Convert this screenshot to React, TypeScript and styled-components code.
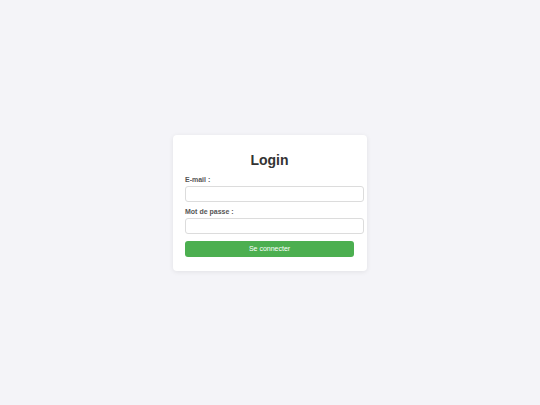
import styled, { createGlobalStyle } from "styled-components";

const GlobalStyle = createGlobalStyle`
  html, body {
    margin: 0;
    padding: 0;
    background: #f4f4f8;
    font-family: "Liberation Sans", Arial, sans-serif;
  }
`;

const Page = styled.div`
  display: flex;
  align-items: center;
  justify-content: center;
  min-height: 100vh;
`;

const Card = styled.form`
  display: flex;
  flex-direction: column;
  width: 169px;
  padding: 12px 13px 14px 12px;
  background: #fff;
  border-radius: 4px;
  box-shadow: 0 1px 5px rgba(0, 0, 0, 0.08);
`;

const Title = styled.h2`
  margin: 5px 0 8px;
  font-size: 14px;
  line-height: 16px;
  font-weight: 700;
  color: #333;
  text-align: center;
`;

const Label = styled.label`
  display: block;
  font-size: 7px;
  line-height: 8px;
  font-weight: 700;
  color: #555;
  margin-bottom: 2px;
`;

const Input = styled.input`
  box-sizing: content-box;
  width: 100%;
  height: 14px;
  padding: 0 4px;
  margin: 0 0 6px;
  border: 1px solid #dcdcdc;
  border-radius: 3px;
  background: #fff;
  font-family: inherit;
  font-size: 7px;
  outline: none;
`;

const Button = styled.button`
  height: 16px;
  margin-top: 1px;
  border: none;
  border-radius: 3px;
  background: #4caf50;
  color: #fff;
  font-family: inherit;
  font-size: 7px;
  cursor: pointer;
`;

export default function App() {
  return (
    <>
      <GlobalStyle />
      <Page>
        <Card onSubmit={(e) => e.preventDefault()}>
          <Title>Login</Title>
          <Label htmlFor="email">E-mail :</Label>
          <Input id="email" type="email" />
          <Label htmlFor="password">Mot de passe :</Label>
          <Input id="password" type="password" />
          <Button type="submit">Se connecter</Button>
        </Card>
      </Page>
    </>
  );
}
